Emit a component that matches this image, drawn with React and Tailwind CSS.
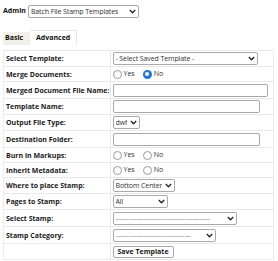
import React from 'react';

const Chevron = () => (
    <svg width="7" height="5" viewBox="0 0 7 5" className="shrink-0">
        <path d="M0.8 1 L3.5 3.8 L6.2 1" fill="none" stroke="#222" strokeWidth="1.3" />
    </svg>
);

const Select = ({ text, width, muted }) => (
    <div
        className="flex items-center justify-between gap-[1px] h-[13px] border border-[#a9a9a9] rounded-[2px] bg-white pl-[2px] pr-[2px] overflow-hidden"
        style={{ width }}
    >
        <span className={`whitespace-nowrap overflow-hidden leading-none tracking-[-0.1px] ${muted ? 'text-[#777]' : 'text-[#333]'}`}>{text}</span>
        <Chevron />
    </div>
);

const Input = ({ width }) => (
    <div className="h-[13px] border border-[#a9a9a9] rounded-[2px] bg-white" style={{ width }} />
);

const Radio = ({ checked }) => (
    checked ? (
        <span className="w-[9px] h-[9px] rounded-full bg-[#1a73e8] flex items-center justify-center">
            <span className="w-[4px] h-[4px] rounded-full bg-white" />
        </span>
    ) : (
        <span className="w-[9px] h-[9px] rounded-full border border-[#9a9a9a] bg-white" />
    )
);

const YesNo = ({ no }) => (
    <div className="flex items-center gap-[2px] text-[#333]">
        <Radio />
        <span className="mr-[6px]">Yes</span>
        <Radio checked={no} />
        <span>No</span>
    </div>
);

const rows = [
    { label: 'Select Template:', h: 16, field: <Select text="- Select Saved Template -" width={145} /> },
    { label: 'Merge Documents:', h: 15, field: <YesNo no /> },
    { label: 'Merged Document File Name:', h: 17, field: <Input width={155} /> },
    { label: 'Template Name:', h: 16, field: <Input width={147} /> },
    { label: 'Output File Type:', h: 16, field: <Select text="dwf" width={27} /> },
    { label: 'Destination Folder:', h: 17, field: <Input width={147} /> },
    { label: 'Burn in Markups:', h: 15, field: <YesNo /> },
    { label: 'Inherit Metadata:', h: 15, field: <YesNo /> },
    { label: 'Where to place Stamp:', h: 16, field: <Select text="Bottom Center" width={62} /> },
    { label: 'Pages to Stamp:', h: 16, field: <Select text="All" width={55} /> },
    { label: 'Select Stamp:', h: 17, field: <Select text={'-'.repeat(44)} width={124} muted /> },
    { label: 'Stamp Category:', h: 17, field: <Select text={'-'.repeat(35)} width={103} muted /> },
];

export default function App() {
    return (
        <div className="w-[278px] h-[261px] bg-white text-[7px] overflow-hidden" style={{ fontFamily: '"Open Sans", "Noto Sans", sans-serif' }}>
            <div className="flex items-center pl-[3px] pt-[5px] gap-[2px]">
                <span className="font-bold text-[#111]">Admin</span>
                <Select text="Batch File Stamp Templates" width={111} />
            </div>
            <div className="flex items-end mt-[13px] ml-[3px] h-[14px]">
                <div className="h-[13px] w-[27px] pl-[2px] flex items-center bg-[#f1efe6] font-bold text-[#111]">Basic</div>
                <div className="h-[15px] px-[6px] flex items-center bg-white border-r border-t border-[#e6e6e6] font-bold text-[#111]">Advanced</div>
            </div>
            <div className="mx-[3px] mt-[5px] w-[271px] border-r border-l border-[#ececec]">
                <table className="w-full border-collapse table-fixed">
                    <tbody>
                        {rows.map((r) => (
                            <tr key={r.label} className="border-t border-[#e8e8e8]" style={{ height: r.h }}>
                                <td className="w-[106px] pl-[2px] font-bold text-[#1a1a1a] whitespace-nowrap border-r border-[#e8e8e8] leading-none">{r.label}</td>
                                <td className="pl-[2px]">{r.field}</td>
                            </tr>
                        ))}
                        <tr className="border-t border-b border-[#e8e8e8]" style={{ height: 16 }}>
                            <td className="w-[106px] border-r border-[#e8e8e8]" />
                            <td className="pl-[2px]">
                                <button className="h-[12px] w-[61px] border border-[#a9a9a9] rounded-[2px] bg-white font-bold text-[#222] leading-none">Save Template</button>
                            </td>
                        </tr>
                    </tbody>
                </table>
            </div>
        </div>
    );
}
